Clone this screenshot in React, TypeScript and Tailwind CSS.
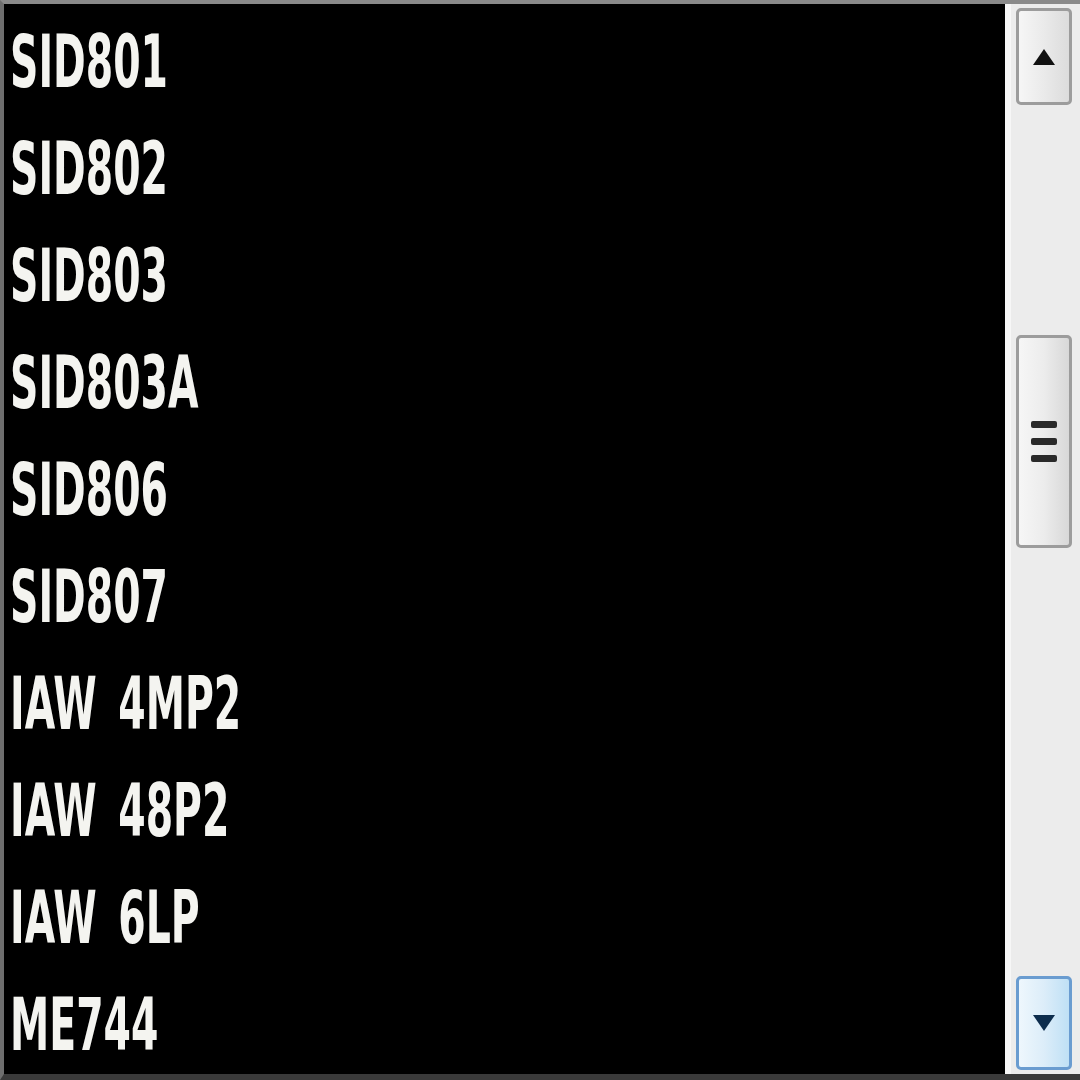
import React from "react";

const ITEMS = [
  "SID801",
  "SID802",
  "SID803",
  "SID803A",
  "SID806",
  "SID807",
  "IAW 4MP2",
  "IAW 48P2",
  "IAW 6LP",
  "ME744",
];

export default function App() {
  return (
    <div className="w-[1080px] h-[1080px] flex bg-black overflow-hidden border-t-[4px] border-l-[4px] border-b-[6px] border-t-[#8a8a8a] border-l-[#6e6e6e] border-b-[#3a3a3a]">
      {/* list */}
      <div className="flex-1 flex flex-col pt-[4px] overflow-hidden">
        {ITEMS.map((item) => (
          <div
            key={item}
            className="h-[107px] shrink-0 flex items-center pl-[6px] text-[#f4f4f0] text-[73px] font-bold leading-none whitespace-nowrap"
            style={{ fontFamily: '"DejaVu Sans Condensed", "DejaVu Sans", sans-serif' }}
          >
            <span className="inline-block origin-left scale-x-[0.6]">{item.replace(" ", "\u00a0\u2009")}</span>
          </div>
        ))}
      </div>

      {/* scrollbar */}
      <div className="w-[75px] h-full flex flex-col items-center bg-[#ececec] border-l-[6px] border-l-[#f7f7f7] pt-[4px] pb-[4px] pr-[4px]">
        {/* up button */}
        <div className="w-[56px] h-[97px] shrink-0 rounded-[5px] border-[3px] border-[#9c9c9c] bg-gradient-to-r from-[#f6f6f6] via-[#eaeaea] to-[#dcdcdc] flex items-center justify-center">
          <svg width="24" height="18" viewBox="0 0 24 18">
            <polygon points="12,1 23,17 1,17" fill="#111" />
          </svg>
        </div>

        <div className="h-[230px] shrink-0" />

        {/* thumb */}
        <div className="w-[56px] h-[213px] shrink-0 rounded-[5px] border-[3px] border-[#9c9c9c] bg-gradient-to-r from-[#f6f6f6] via-[#ececec] to-[#d8d8d8] flex flex-col items-center justify-center gap-[10px]">
          <div className="w-[26px] h-[7px] rounded-[2px] bg-[#2a2a2a]" />
          <div className="w-[26px] h-[7px] rounded-[2px] bg-[#2a2a2a]" />
          <div className="w-[26px] h-[7px] rounded-[2px] bg-[#2a2a2a]" />
        </div>

        <div className="flex-1" />

        {/* down button (hover) */}
        <div className="w-[56px] h-[94px] shrink-0 rounded-[5px] border-[3px] border-[#6a9cd0] bg-gradient-to-r from-[#eef7fd] via-[#dcedf9] to-[#bfe0f5] flex items-center justify-center">
          <svg width="24" height="18" viewBox="0 0 24 18">
            <polygon points="1,1 23,1 12,17" fill="#0d2d4d" />
          </svg>
        </div>
      </div>
    </div>
  );
}
